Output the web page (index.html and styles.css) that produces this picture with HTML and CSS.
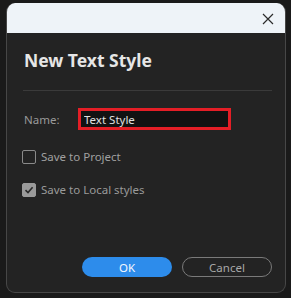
FILE: index.html
```html
<!DOCTYPE html>
<html lang="en">
<head>
  <meta charset="UTF-8" />
  <meta name="viewport" content="width=device-width, initial-scale=1" />
  <title>New Text Style</title>
  <link rel="stylesheet" href="styles.css">
</head>
<body>

  <div class="dialog">
    <div class="titlebar">
      <button class="close" aria-label="Close">
        <svg width="12" height="12" viewBox="0 0 12 12">
          <path d="M1 1 L11 11 M11 1 L1 11" stroke="#2b2b2b" stroke-width="1.2" fill="none" />
        </svg>
      </button>
    </div>

    <div class="content">
      <h1>New Text Style</h1>
      <div class="divider"></div>

      <div class="field">
        <label for="name">Name:</label>
        <input type="text" id="name" value="Text Style" />
      </div>

      <label class="check">
        <span class="box"></span>
        Save to Project
      </label>

      <label class="check disabled">
        <span class="box checked">
          <svg width="10" height="10" viewBox="0 0 10 10">
            <path d="M1.5 5.2 L4 7.6 L8.6 2.2" stroke="#2a2a2a" stroke-width="1.6" fill="none" />
          </svg>
        </span>
        Save to Local styles
      </label>

      <div class="buttons">
        <button class="btn primary">OK</button>
        <button class="btn secondary">Cancel</button>
      </div>
    </div>
  </div>

</body>
</html>
```

FILE: styles.css
```css
body {
  margin: 0;
  padding: 3px 0 0 6px;
  background: #1a1a1a;
  font-family: "Noto Sans", sans-serif;
  color: #b0b0b0;
  width: 291px;
  height: 298px;
  box-sizing: border-box;
  overflow: hidden;
}
.dialog {
  width: 280px;
  height: 290px;
  background: #232323;
  border: 1px solid #474747;
  border-top: none;
  border-radius: 9px;
  box-sizing: border-box;
  overflow: hidden;
  display: flex;
  flex-direction: column;
}
.titlebar {
  height: 30px;
  background: #eef3f8;
  display: flex;
  justify-content: flex-end;
  align-items: center;
  padding-right: 9px;
}
.close {
  background: none;
  border: none;
  padding: 0;
  width: 16px;
  height: 16px;
  display: flex;
  align-items: center;
  justify-content: center;
  margin-top: 2px;
}
.content {
  flex: 1;
  padding: 0 13px 15px 16px;
  display: flex;
  flex-direction: column;
}
h1 {
  margin: 14px 0 0 1px;
  font-size: 17.5px;
  font-weight: bold;
  color: #e6e6e6;
  line-height: 26px;
}
.divider {
  height: 1px;
  background: #3a3a3a;
  margin-top: 17px;
}
.field {
  display: flex;
  align-items: center;
  margin-top: 17px;
}
.field label {
  width: 54px;
  font-size: 11.5px;
  color: #9a9a9a;
  padding-left: 1px;
}
.field input {
  width: 153px;
  height: 22px;
  box-sizing: border-box;
  background: #121212;
  border: 3px solid #e41e26;
  color: #e0e0e0;
  font-family: "Noto Sans", sans-serif;
  font-size: 11.5px;
  padding: 0 0 0 3px;
  outline: none;
}
.check {
  display: flex;
  align-items: center;
  gap: 5px;
  font-size: 11.5px;
  color: #a0a0a0;
  margin-top: 19px;
  margin-left: -1px;
}
.check + .check {
  margin-top: 18px;
}
.box {
  width: 12px;
  height: 12px;
  border: 1px solid #8a8a8a;
  border-radius: 2px;
  display: flex;
  align-items: center;
  justify-content: center;
}
.box.checked {
  background: #9a9a9a;
  border-color: #9a9a9a;
}
.disabled {
  color: #9a9a9a;
}
.buttons {
  margin-top: auto;
  display: flex;
  justify-content: flex-end;
  gap: 10px;
}
.btn {
  width: 90px;
  height: 20px;
  border-radius: 10px;
  font-family: "Noto Sans", sans-serif;
  font-size: 11.5px;
  padding: 0;
  box-sizing: border-box;
}
.primary {
  background: #2d8ceb;
  border: none;
  color: #f4f8ff;
}
.secondary {
  background: transparent;
  border: 1px solid #7a7a7a;
  color: #a8a8a8;
}
```
